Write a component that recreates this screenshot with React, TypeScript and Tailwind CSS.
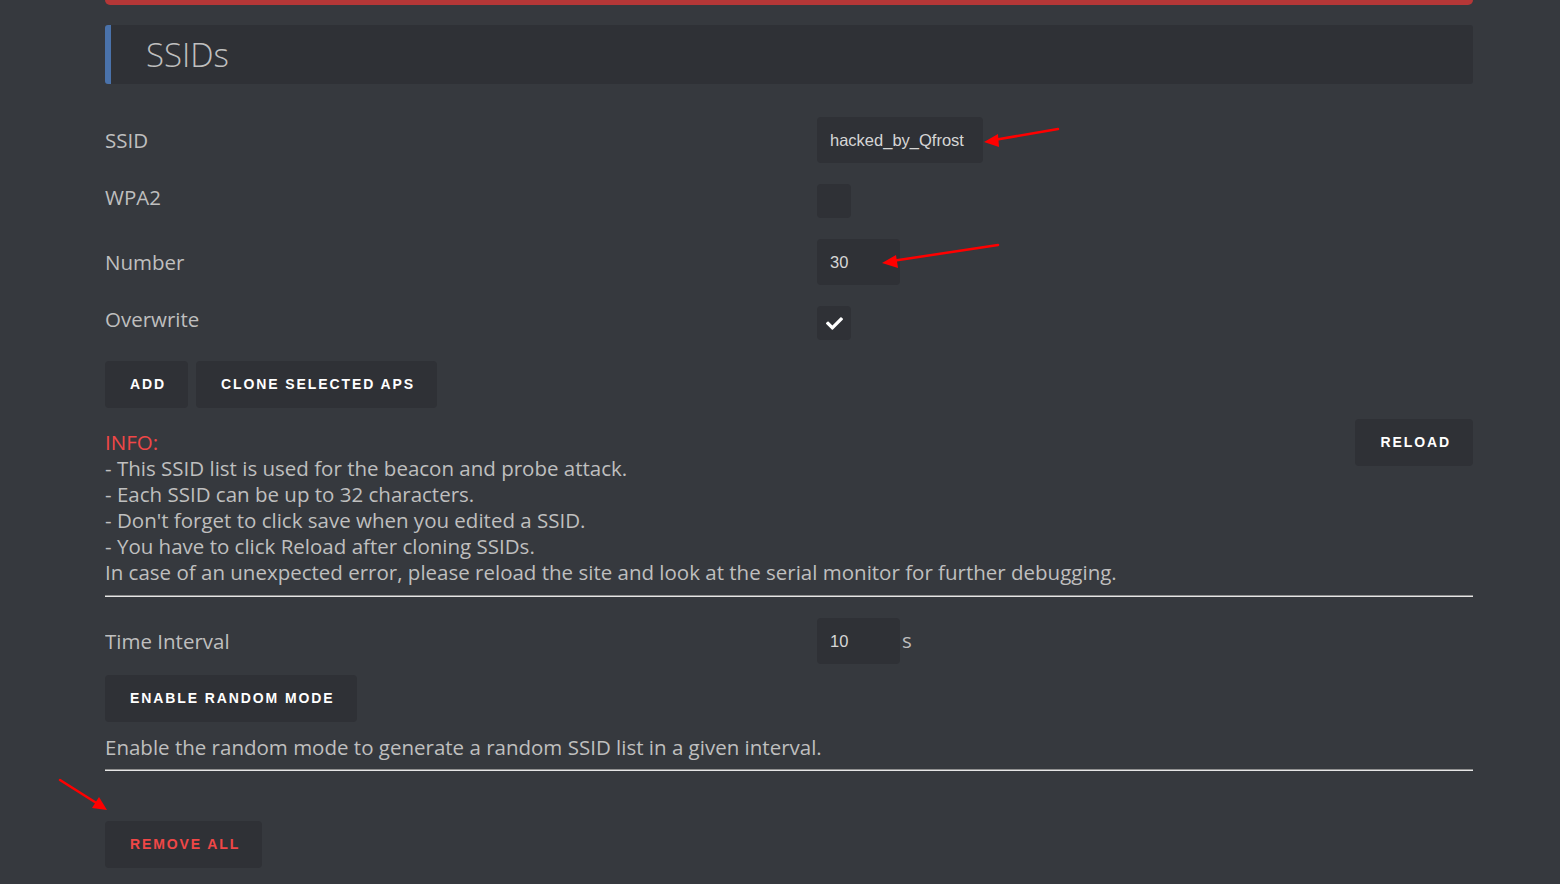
import React from "react";
import { FaCheck } from "react-icons/fa";

const body = { fontFamily: '"Open Sans", "Noto Sans", sans-serif' };

function Btn({ children, red }: { children: React.ReactNode; red?: boolean }) {
  return (
    <button
      className={
        "h-[47px] rounded-[4px] bg-[#2f3136] pl-[25px] pr-[22px] text-[14px] font-bold tracking-[1.9px] " +
        (red ? "text-[#f04747]" : "text-white")
      }
      style={{ fontFamily: '"Liberation Sans", Arial, sans-serif' }}
    >
      {children}
    </button>
  );
}

function Divider() {
  return <div className="h-0 border-t border-t-[#8f8f8f] border-b border-b-[#e6e6e6]" />;
}

function Row({ label, children, labelOffset = 0 }: { label: string; children: React.ReactNode; labelOffset?: number }) {
  return (
    <div className="flex items-center">
      <div className={"w-[712px] text-[20.5px] text-[#bfbfbf] " + (labelOffset ? "-mt-[8px]" : "")}>{label}</div>
      {children}
    </div>
  );
}

function TextInput({ value, w }: { value: string; w: string }) {
  return (
    <div
      className={"flex h-[46px] items-center rounded-[4px] bg-[#2f3136] pl-[13px] text-[16.5px] text-[#d6d6d6] " + w}
      style={{ fontFamily: '"Liberation Sans", Arial, sans-serif' }}
    >
      {value}
    </div>
  );
}

function Checkbox({ checked }: { checked?: boolean }) {
  return (
    <div className="flex h-[34px] w-[34px] items-center justify-center rounded-[4px] bg-[#2f3136]">
      {checked && <FaCheck className="h-[17px] w-[17px] text-white" />}
    </div>
  );
}

export default function App() {
  return (
    <div className="relative min-h-[884px] w-full bg-[#36393e]" style={body}>
      <div className="ml-[105px] h-[884px] w-[1368px] overflow-hidden">
        <div className="h-[5px] rounded-b-[6px] bg-[#b53737]" />
        <div className="mt-[20px] flex h-[59px] items-center rounded-[3px] border-l-[6px] border-[#4a72aa] bg-[#2f3136] pl-[35px]">
          <h1 className="text-[33px] font-light text-[#bfbfbf]" style={{ fontFamily: '"Open Sans", sans-serif' }}>SSIDs</h1>
        </div>

        <div className="mt-[33px] flex flex-col gap-[21px]">
          <Row label="SSID">
            <TextInput value="hacked_by_Qfrost" w="w-[166px]" />
          </Row>
          <Row label="WPA2" labelOffset={1}>
            <Checkbox />
          </Row>
          <Row label="Number">
            <TextInput value="30" w="w-[83px]" />
          </Row>
          <Row label="Overwrite" labelOffset={1}>
            <Checkbox checked />
          </Row>
          <div className="flex gap-[8px]">
            <Btn>ADD</Btn>
            <Btn>CLONE SELECTED APS</Btn>
          </div>
        </div>

        <div className="mt-[11px] flex items-start justify-between">
          <div className="pt-[10px] text-[20.5px] leading-[26px] text-[#bfbfbf]">
            <div className="text-[#f04747]">INFO:</div>
            <div>- This SSID list is used for the beacon and probe attack.</div>
            <div>- Each SSID can be up to 32 characters.</div>
            <div>- Don't forget to click save when you edited a SSID.</div>
            <div>- You have to click Reload after cloning SSIDs.</div>
            <div>In case of an unexpected error, please reload the site and look at the serial monitor for further debugging.</div>
          </div>
          <Btn>RELOAD</Btn>
        </div>

        <div className="mt-[10px]">
          <Divider />
        </div>

        <div className="mt-[21px]">
          <Row label="Time Interval">
            <TextInput value="10" w="w-[83px]" />
            <span className="ml-[2px] -mt-[2px] text-[20.5px] text-[#bfbfbf]">s</span>
          </Row>
        </div>
        <div className="mt-[11px]">
          <Btn>ENABLE RANDOM MODE</Btn>
        </div>
        <div className="mt-[12px] text-[20.5px] leading-[26px] text-[#bfbfbf]">
          Enable the random mode to generate a random SSID list in a given interval.
        </div>
        <div className="mt-[9px]">
          <Divider />
        </div>
        <div className="mt-[50px]">
          <Btn red>REMOVE ALL</Btn>
        </div>
      </div>

      <svg className="pointer-events-none absolute left-0 top-0" width="1560" height="884">
        <g stroke="#ff0000" strokeWidth="2.5" fill="#ff0000" strokeLinecap="round">
          <line x1="1058" y1="129" x2="994" y2="140" />
          <polygon points="984,142 998,134 999,147" stroke="none" />
          <line x1="998" y1="245" x2="892" y2="261" />
          <polygon points="882,263 896,255 898,268" stroke="none" />
          <line x1="60" y1="780" x2="98" y2="804" />
          <polygon points="107,810 92,808 99,797" stroke="none" />
        </g>
      </svg>
    </div>
  );
}
